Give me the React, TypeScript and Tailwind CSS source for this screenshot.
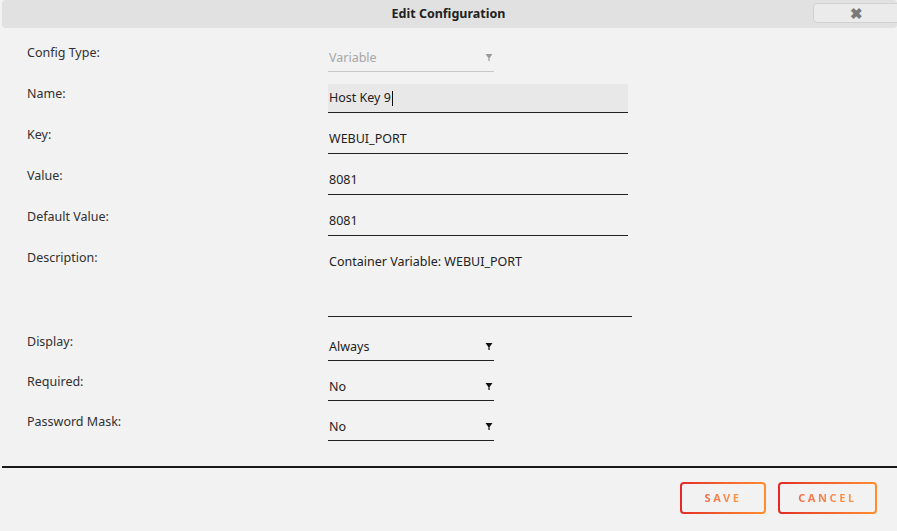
import React from "react";

const font = { fontFamily: '"Noto Sans", "Open Sans", sans-serif' };

function Label({ children }: { children: React.ReactNode }) {
  return <div className="w-[301px] shrink-0 pt-[1px] leading-[18px] text-[12.5px] text-[#303030]">{children}</div>;
}

function Arrow({ color }: { color: string }) {
  return (
    <svg className="absolute right-[1px] top-[10px]" width="8" height="9" viewBox="0 0 8 9">
      <path d="M0.5 1 H7.5 L4.6 5 V8 H3.4 V5 Z" fill={color} />
    </svg>
  );
}

function Select({ value, disabled }: { value: string; disabled?: boolean }) {
  return (
    <div
      className={`relative h-[29px] w-[166px] border-b flex items-center pt-[3px] px-[1px] text-[12.5px] ${
        disabled ? "border-[#c8c8c8] text-[#a6a6a6]" : "border-[#222] text-[#222]"
      }`}
    >
      <span>{value}</span>
      <Arrow color={disabled ? "#9a9a9a" : "#111"} />
    </div>
  );
}

function Input({ value, active }: { value: string; active?: boolean }) {
  return (
    <div
      className={`h-[29px] w-[300px] border-b border-[#222] flex items-center px-[1px] text-[12.5px] text-[#222] ${
        active ? "bg-[#e8e8e8]" : ""
      }`}
    >
      <span>{value}</span>
      {active && <span className="ml-[1px] h-[15px] w-px bg-[#111]" />}
    </div>
  );
}

function Row({ label, children, className = "" }: { label: string; children: React.ReactNode; className?: string }) {
  return (
    <div className={`flex items-start ${className}`}>
      <Label>{label}</Label>
      {children}
    </div>
  );
}

function GradButton({ label, width }: { label: string; width: string }) {
  return (
    <div className={`${width} h-[32px] rounded-[4px] p-[2px] bg-linear-to-r from-[#e22828] to-[#ff8d30]`}>
      <div className="h-full w-full rounded-[2px] bg-[#f2f2f2] flex items-center justify-center">
        <span className="bg-linear-to-r from-[#f36b4a] to-[#ff9a40] bg-clip-text text-transparent text-[11px] font-bold tracking-[2.6px]">
          {label}
        </span>
      </div>
    </div>
  );
}

export default function App() {
  return (
    <div className="w-[897px] h-[531px] bg-[#f2f2f2] overflow-hidden relative" style={font}>
      {/* title bar */}
      <div className="ml-[2px] h-[28px] bg-[#e1e1e1] rounded-[4px] relative flex items-center justify-center">
        <span className="text-[12.5px] font-bold text-[#222] -ml-[2px]">Edit Configuration</span>
        <div className="absolute left-[811px] top-[3px] h-[20px] w-[100px] rounded-[4px] border border-[#d2d2d2] bg-[#ebebeb] flex items-center">
          <span className="ml-[36px] text-[15px] leading-none font-bold text-[#7a7a7a]">✖</span>
        </div>
      </div>

      {/* form */}
      <div className="pl-[27px] pt-[15px] flex flex-col gap-[12px]">
        <Row label="Config Type:">
          <Select value="Variable" disabled />
        </Row>
        <Row label="Name:">
          <Input value="Host Key 9" active />
        </Row>
        <Row label="Key:">
          <Input value="WEBUI_PORT" />
        </Row>
        <Row label="Value:">
          <Input value="8081" />
        </Row>
        <Row label="Default Value:">
          <Input value="8081" />
        </Row>
        <Row label="Description:">
          <div className="h-[69px] w-[304px] border-b border-[#222] pt-[5px] px-[1px] text-[12.5px] text-[#222]">
            Container Variable: WEBUI_PORT
          </div>
        </Row>
        <div className="mt-[3px] flex flex-col gap-[11px]">
          <Row label="Display:">
            <Select value="Always" />
          </Row>
          <Row label="Required:">
            <Select value="No" />
          </Row>
          <Row label="Password Mask:">
            <Select value="No" />
          </Row>
        </div>
      </div>

      {/* separator */}
      <div className="absolute left-[2px] right-0 top-[466px] h-[2px] bg-[#1a1a1a]" />

      {/* buttons */}
      <div className="absolute top-[482px] right-[20px] flex gap-[12px]">
        <GradButton label="SAVE" width="w-[86px]" />
        <GradButton label="CANCEL" width="w-[99px]" />
      </div>
    </div>
  );
}
